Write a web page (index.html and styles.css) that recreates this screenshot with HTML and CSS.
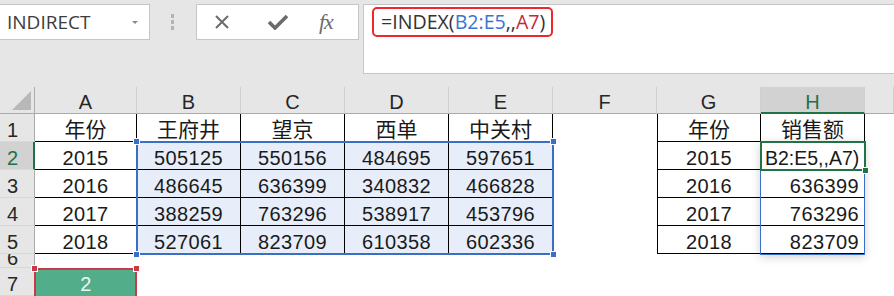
FILE: index.html
```html
<!DOCTYPE html>
<html lang="zh-CN">
<head>
  <meta charset="UTF-8">
  <title>INDEX</title>
  <link rel="stylesheet" href="styles.css">
</head>
<body>

  <!-- name box + formula bar -->
  <div class="toolbar">
    <div class="namebox">
      <span>INDIRECT</span>
      <span class="caret"></span>
    </div>
    <div class="grip"><i></i><i></i><i></i></div>
    <div class="fxbox">
      <svg class="ico-x" width="16" height="16" viewBox="0 0 16 16">
        <path d="M2 2 L14 14 M14 2 L2 14" stroke="#6b6b6b" stroke-width="2" fill="none"/>
      </svg>
      <svg class="ico-ok" width="22" height="16" viewBox="0 0 22 16">
        <path d="M2 8 L8 14 L20 2" stroke="#6b6b6b" stroke-width="3.6" fill="none"/>
      </svg>
      <span class="fx">fx</span>
    </div>
    <div class="formula">
      <span class="fbox">=INDEX(<span class="ref-b">B2:E5</span>,,<span class="ref-a">A7</span>)</span>
    </div>
  </div>

  <!-- sheet -->
  <div class="sheet">
    <div class="cell hd corner">
      <svg width="35" height="26" viewBox="0 0 35 26"><polygon points="31,4 31,23 12,23" fill="#b8b8b8"/></svg>
    </div>
    <div class="cell hd">A</div>
    <div class="cell hd">B</div>
    <div class="cell hd">C</div>
    <div class="cell hd">D</div>
    <div class="cell hd">E</div>
    <div class="cell hd">F</div>
    <div class="cell hd">G</div>
    <div class="cell hd on">H</div>
    <div class="cell hd"></div>

    <div class="cell rh">1</div>
    <div class="cell c t cjk">年份</div>
    <div class="cell c t cjk">王府井</div>
    <div class="cell c t cjk">望京</div>
    <div class="cell c t cjk">西单</div>
    <div class="cell c t cjk">中关村</div>
    <div class="cell c"></div>
    <div class="cell c t tl cjk">年份</div>
    <div class="cell c t cjk">销售额</div>
    <div class="cell c"></div>

    <div class="cell rh on">2</div>
    <div class="cell c t">2015</div>
    <div class="cell c t sel">505125</div>
    <div class="cell c t sel">550156</div>
    <div class="cell c t sel">484695</div>
    <div class="cell c t sel">597651</div>
    <div class="cell c"></div>
    <div class="cell c t tl">2015</div>
    <div class="cell c t edit">B2:E5,,A7)</div>
    <div class="cell c"></div>

    <div class="cell rh">3</div>
    <div class="cell c t">2016</div>
    <div class="cell c t sel">486645</div>
    <div class="cell c t sel">636399</div>
    <div class="cell c t sel">340832</div>
    <div class="cell c t sel">466828</div>
    <div class="cell c"></div>
    <div class="cell c t tl">2016</div>
    <div class="cell c t r">636399</div>
    <div class="cell c"></div>

    <div class="cell rh">4</div>
    <div class="cell c t">2017</div>
    <div class="cell c t sel">388259</div>
    <div class="cell c t sel">763296</div>
    <div class="cell c t sel">538917</div>
    <div class="cell c t sel">453796</div>
    <div class="cell c"></div>
    <div class="cell c t tl">2017</div>
    <div class="cell c t r">763296</div>
    <div class="cell c"></div>

    <div class="cell rh">5</div>
    <div class="cell c t">2018</div>
    <div class="cell c t sel">527061</div>
    <div class="cell c t sel">823709</div>
    <div class="cell c t sel">610358</div>
    <div class="cell c t sel">602336</div>
    <div class="cell c"></div>
    <div class="cell c t tl">2018</div>
    <div class="cell c t r">823709</div>
    <div class="cell c"></div>

    <div class="cell rh short">6</div>
    <div class="cell c"></div>
    <div class="cell c"></div>
    <div class="cell c"></div>
    <div class="cell c"></div>
    <div class="cell c"></div>
    <div class="cell c"></div>
    <div class="cell c"></div>
    <div class="cell c"></div>
    <div class="cell c"></div>

    <div class="cell rh">7</div>
    <div class="cell c ref">2</div>
    <div class="cell c"></div>
    <div class="cell c"></div>
    <div class="cell c"></div>
    <div class="cell c"></div>
    <div class="cell c"></div>
    <div class="cell c"></div>
    <div class="cell c"></div>
    <div class="cell c"></div>

    <!-- range highlights drawn over the grid -->
    <div class="range-blue">
      <span class="knob tl-k"></span><span class="knob tr-k"></span>
      <span class="knob bl-k"></span><span class="knob br-k"></span>
    </div>
    <div class="range-red">
      <span class="knob tl-k"></span><span class="knob tr-k"></span>
    </div>
    <div class="spill"></div>
    <div class="active"><span class="knob br-k"></span></div>
  </div>

</body>
</html>
```

FILE: styles.css
```css
body {
  margin: 0;
  width: 894px;
  height: 296px;
  overflow: hidden;
  background: #fff;
  font-family: "Liberation Sans", "Noto Sans CJK SC", sans-serif;
  color: #1a1a1a;
}

/* ---- top bar ---- */
.toolbar {
  height: 87px;
  box-sizing: border-box;
  padding-top: 4px;
  background: #e6e6e6;
  display: flex;
  align-items: flex-start;
}
.namebox {
  width: 151px;
  height: 36px;
  margin-left: -1px;
  box-sizing: border-box;
  background: #fff;
  border: 1px solid #c6c6c6;
  display: flex;
  align-items: center;
  justify-content: space-between;
  padding: 0 11px 0 7px;
  font-family: "Open Sans", sans-serif;
  font-size: 19px;
  color: #3c3c3c;
}
.caret {
  width: 0;
  height: 0;
  border-left: 3px solid transparent;
  border-right: 3px solid transparent;
  border-top: 3px solid #8a8a8a;
}
.grip {
  margin: 10px 0 0 21px;
  display: flex;
  flex-direction: column;
  gap: 2px;
}
.grip i {
  display: block;
  width: 3px;
  height: 4px;
  background: #b3b3b3;
}
.fxbox {
  width: 163px;
  height: 36px;
  margin-left: 22px;
  box-sizing: border-box;
  background: #fff;
  border: 1px solid #c6c6c6;
  display: flex;
  align-items: center;
}
.ico-x { margin-left: 17px; }
.ico-ok { margin-left: 37px; }
.fx {
  margin-left: 30px;
  font-family: "Liberation Serif", serif;
  font-style: italic;
  font-size: 22px;
  color: #6b6b6b;
  letter-spacing: -1px;
}
.formula {
  flex: 1;
  height: 70px;
  margin-left: 4px;
  margin-right: -1px;
  box-sizing: border-box;
  background: #fff;
  border: 1px solid #c6c6c6;
  padding: 2px 0 0 8px;
}
.fbox {
  display: inline-block;
  border: 2px solid #f0262a;
  border-radius: 5px;
  padding: 0 6px 0 7px;
  height: 26px;
  line-height: 26px;
  font-family: "Open Sans", sans-serif;
  font-size: 19.6px;
  color: #333;
}
.ref-b { color: #3a74d0; }
.ref-a { color: #c0283c; }

/* ---- sheet grid ---- */
.sheet {
  position: relative;
  display: grid;
  grid-template-columns: 35px 102px repeat(7, 104px) 1fr;
  grid-template-rows: 27px repeat(5, 28px) 14px 28px;
}
.cell {
  box-sizing: border-box;
  overflow: hidden;
  white-space: nowrap;
}
.hd {
  background: #e6e6e6;
  border-right: 1px solid #cfcfcf;
  border-bottom: 1px solid #ababab;
  text-align: center;
  font-size: 20px;
  line-height: 24px;
  padding-top: 3px;
  color: #262626;
}
.hd.corner {
  padding: 0;
  border-right: 1px solid #ababab;
}
.hd.corner svg { display: block; }
.hd.on {
  background: #d2d2d2;
  color: #217346;
  border-bottom: 2px solid #217346;
}
.rh {
  background: #e6e6e6;
  border-right: 1px solid #ababab;
  border-bottom: 1px solid #d8d8d8;
  padding: 4px 0 0 7px;
  font-size: 20px;
  line-height: 24px;
  color: #262626;
}
.rh.on {
  background: #d2d2d2;
  color: #217346;
  border-right: 2px solid #217346;
}
.rh.short {
  padding-top: 0;
  line-height: 8px;
}
.c {
  text-align: center;
  font-size: 20px;
  line-height: 24px;
  padding-top: 4px;
  letter-spacing: 0.4px;
}
.c.cjk {
  font-size: 21px;
  letter-spacing: 0;
}
.t {
  border-right: 1px solid #000;
  border-bottom: 1px solid #000;
}
.tl { border-left: 1px solid #000; }
.sel { background: #e8eef9; }
.r {
  text-align: right;
  padding-right: 5px;
}
.edit {
  text-align: left;
  padding-left: 4px;
  letter-spacing: 0;
  font-size: 19.5px;
}
.ref {
  background: #52ad8b;
  color: #eef7f2;
}

/* ---- overlays ---- */
.range-blue,
.range-red,
.spill,
.active {
  position: absolute;
  box-sizing: border-box;
}
.range-blue {
  left: 136px;
  top: 54px;
  width: 418px;
  height: 114px;
  border: 2px solid #3b6fc6;
}
.range-red {
  left: 34px;
  top: 181px;
  width: 103px;
  height: 40px;
  border: 2px solid #c8394a;
}
.spill {
  left: 760px;
  top: 54px;
  width: 105px;
  height: 114px;
  border: 1px solid #3b6fc6;
  box-shadow: 0 2px 9px rgba(0, 0, 0, 0.18);
}
.active {
  left: 760px;
  top: 54px;
  width: 106px;
  height: 30px;
  border: 2px solid #217346;
}
.knob {
  position: absolute;
  width: 5px;
  height: 5px;
  background: #3b6fc6;
  border: 1px solid #fff;
}
.range-red .knob { background: #c8394a; }
.active .knob { background: #217346; }
.tl-k { left: -5px; top: -5px; }
.tr-k { right: -5px; top: -5px; }
.bl-k { left: -5px; bottom: -5px; }
.br-k { right: -5px; bottom: -5px; }
```
